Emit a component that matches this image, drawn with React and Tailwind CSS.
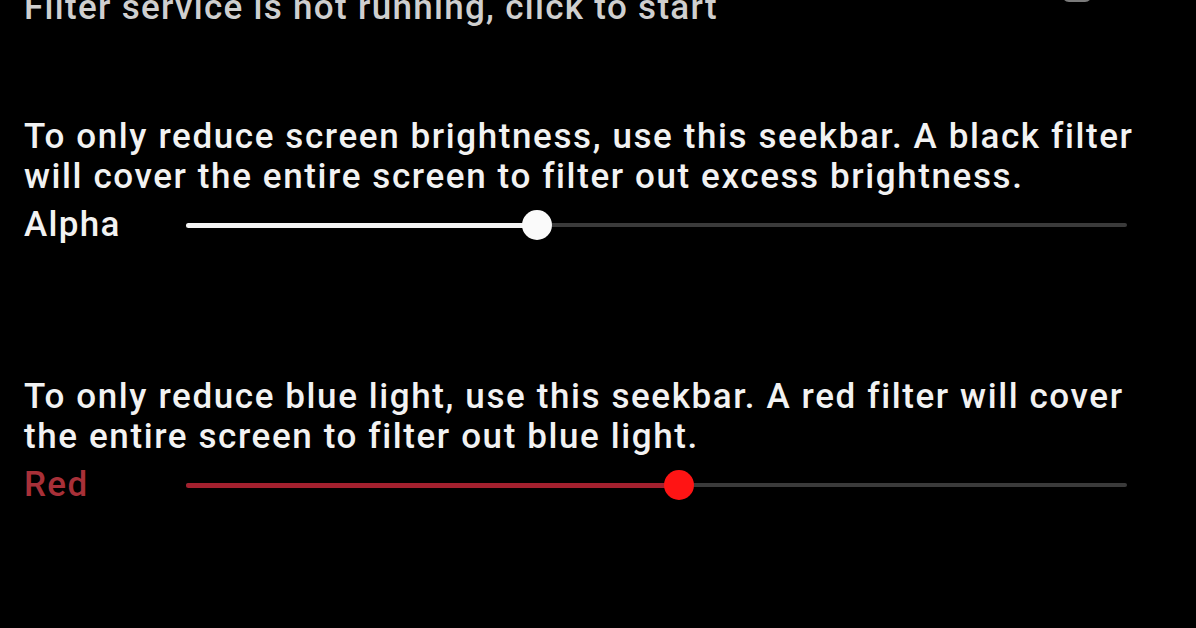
const seekbars = [
  {
    text: 'To only reduce screen brightness, use this seekbar. A black filter will cover the entire screen to filter out excess brightness.',
    label: 'Alpha',
    value: 0.373,
    labelClass: 'text-[#f2f2f2]',
    activeClass: 'bg-[#f4f4f4]',
    thumbClass: 'bg-[#fafafa]',
  },
  {
    text: 'To only reduce blue light, use this seekbar. A red filter will cover the entire screen to filter out blue light.',
    label: 'Red',
    value: 0.524,
    labelClass: 'text-[#a83038]',
    activeClass: 'bg-[#a3202e]',
    thumbClass: 'bg-[#ff1414]',
  },
];

function Seekbar({ value, activeClass, thumbClass }) {
  return (
    <div className="relative flex-1 h-[30px] flex items-center">
      <div className="w-full h-[4px] bg-[#3a3a3a] rounded-full" />
      <div
        className={`absolute left-0 h-[5px] rounded-full ${activeClass}`}
        style={{ width: `${value * 100}%` }}
      />
      <div
        className={`absolute w-[30px] h-[30px] rounded-full -translate-x-1/2 ${thumbClass}`}
        style={{ left: `${value * 100}%` }}
      />
    </div>
  );
}

export default function App() {
  return (
    <div className="w-[1196px] h-[628px] bg-black overflow-hidden font-['Roboto','Liberation_Sans',sans-serif]">
      <div className="flex items-start justify-between pl-[24px] pr-[104px] -mt-[10px]">
        <p className="text-[35px] leading-[36px] font-medium text-[#cfcfcf] tracking-[1.3px]">
          Filter service is not running, click to start
        </p>
        <div className="w-[30px] h-[12px] rounded-b-[7px] bg-[#7a7a7a]" />
      </div>

      <div className="px-[24px] pt-[91px]">
        {seekbars.map((s, i) => (
          <section key={s.label} className={i > 0 ? 'mt-[132px]' : ''}>
            <p className="pr-[28px] text-[35px] leading-[40px] font-medium tracking-[1.6px] text-[#f2f2f2]">{s.text}</p>
            <div className="flex items-center h-[40px] mt-[8px] pr-[45px]">
              <span className={`w-[162px] text-[35px] leading-[40px] font-medium tracking-[1.3px] ${s.labelClass}`}>{s.label}</span>
              <Seekbar value={s.value} activeClass={s.activeClass} thumbClass={s.thumbClass} />
            </div>
          </section>
        ))}
      </div>
    </div>
  );
}
